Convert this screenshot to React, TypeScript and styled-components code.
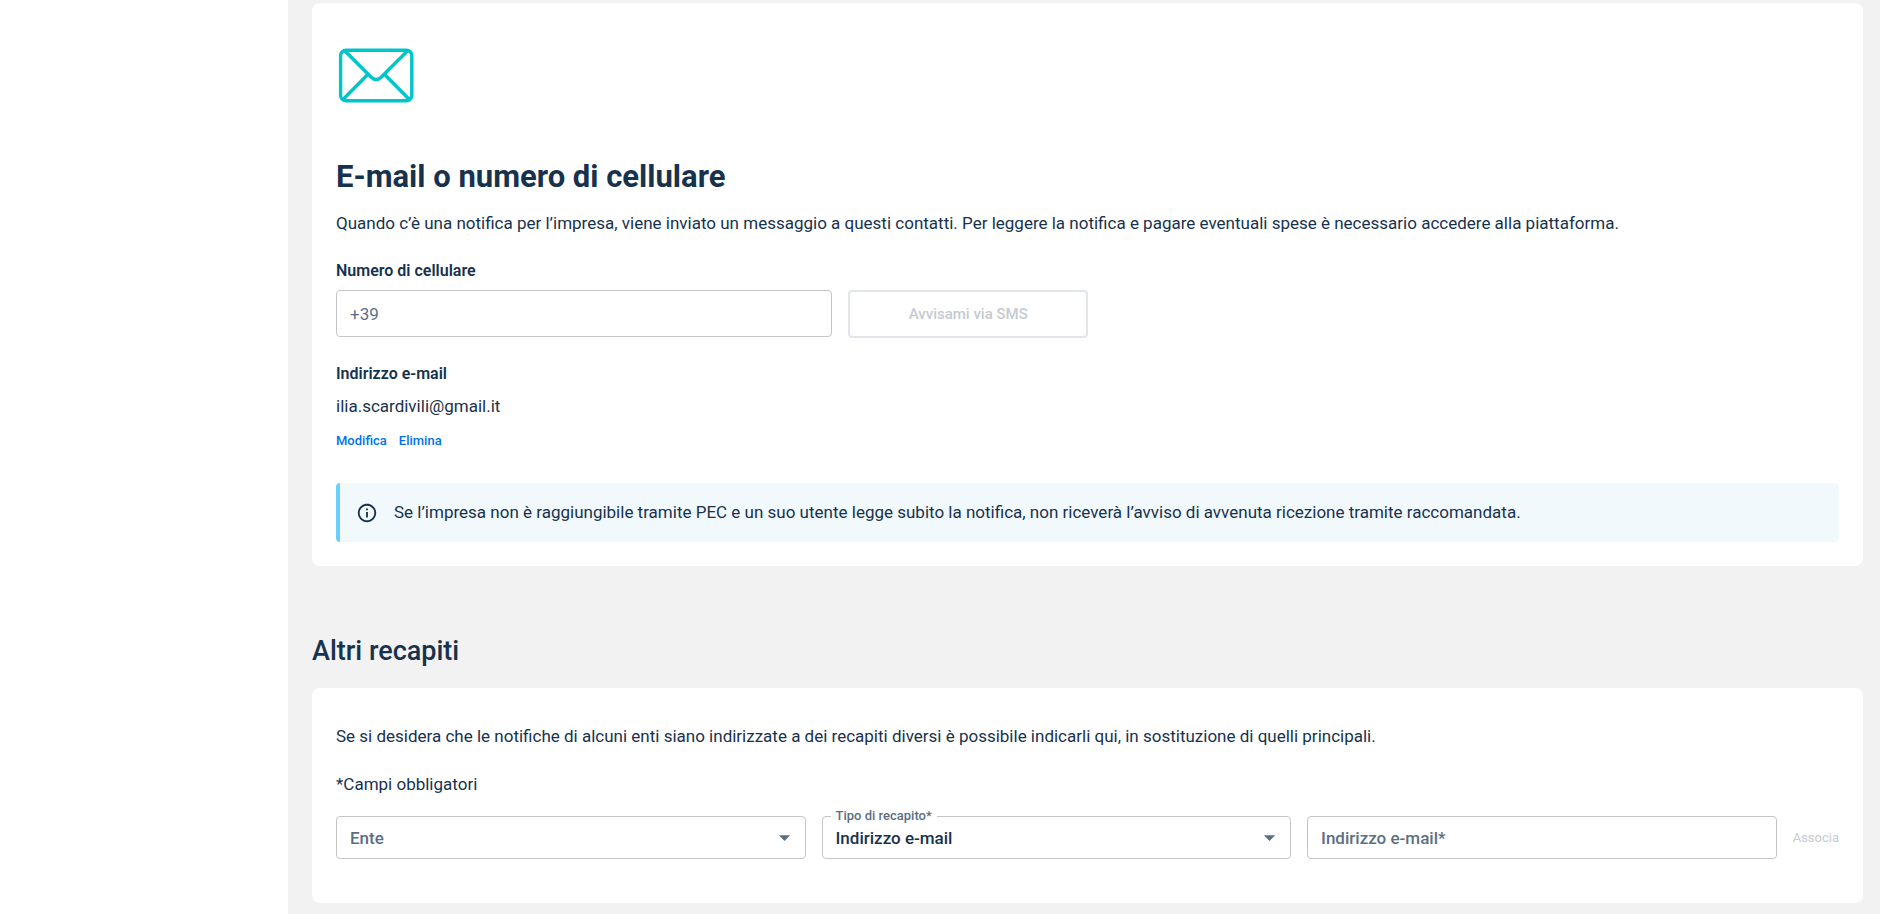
import React from 'react';
import styled, { createGlobalStyle } from 'styled-components';
import { MdInfoOutline } from 'react-icons/md';

const color = {
  text: '#17324d',
  muted: '#5c6f82',
  link: '#0073e6',
  disabled: '#c5cbd2',
  disabledBorder: '#e2e5e9',
  border: '#c4c4c4',
  page: '#f2f2f2',
  teal: '#00c5ca',
  infoBar: '#6bcffb',
  infoBg: '#f1f9fd',
};

const GlobalStyle = createGlobalStyle`
  *, *::before, *::after { box-sizing: border-box; }
  body {
    margin: 0;
    background: #fff;
    color: ${color.text};
    font: 400 17px/24px Roboto, "Liberation Sans", sans-serif;
  }
  h1, h2, h3, p { margin: 0; }
  button, input, select { font-family: inherit; margin: 0; }
`;

const Page = styled.div`
  display: grid;
  grid-template-columns: 288px minmax(0, 1fr);
  min-height: 100vh;
`;

const SideNav = styled.aside`
  background: #fff;
`;

const Main = styled.main`
  background: ${color.page};
  padding: 3px 17px 11px 24px;
`;

const Card = styled.section`
  display: flow-root;
  background: #fff;
  border-radius: 8px;
  padding: 32px 24px 24px;
`;

const OtherCard = styled(Card)`
  padding: 36px 24px 44px;
`;

const Illustration = styled.svg`
  display: block;
  width: 80px;
  height: 80px;
  margin-bottom: 42px;
  fill: none;
  stroke: ${color.teal};
  stroke-width: 3.4;
`;

const CardTitle = styled.h2`
  font-size: 31px;
  line-height: 40px;
  font-weight: 700;
  margin-bottom: 14px;
`;

const SectionTitle = styled.h2`
  font-size: 27px;
  line-height: 42px;
  font-weight: 500;
  margin: 64px 0 16px;
`;

const Paragraph = styled.p`
  margin-bottom: 24px;
`;

const FieldTitle = styled.h3`
  font-size: 16px;
  line-height: 24px;
  font-weight: 600;
  margin-bottom: 7px;
`;

const PhoneForm = styled.form`
  display: grid;
  grid-template-columns: 33% 16%;
  gap: 16px;
  align-items: start;
  margin-bottom: 24px;
`;

const TextInput = styled.input<{ $strong?: boolean }>`
  display: block;
  width: 100%;
  height: ${(p) => (p.$strong ? 43 : 47)}px;
  padding: 0 13px;
  border: 1px solid ${color.border};
  border-radius: 4px;
  background: #fff;
  color: ${color.text};
  font-size: 17px;
  font-weight: ${(p) => (p.$strong ? 500 : 400)};

  &::placeholder {
    color: ${color.muted};
    opacity: 1;
  }
`;

const OutlinedButton = styled.button`
  height: 48px;
  border: 2px solid ${color.disabledBorder};
  border-radius: 4px;
  background: #fff;
  color: ${color.disabled};
  font-size: 15px;
  font-weight: 500;
`;

const TextButton = styled.button`
  padding: 0;
  border: 0;
  background: none;
  color: ${color.link};
  font-size: 13px;
  line-height: 21px;
  font-weight: 500;

  &:disabled {
    color: ${color.disabled};
    font-weight: 400;
  }
`;

const Email = styled.p`
  line-height: 26px;
  margin-bottom: 11px;
`;

const Actions = styled.div`
  display: flex;
  gap: 12px;
  margin-bottom: 32px;
`;

const InfoBanner = styled.div`
  display: flex;
  align-items: center;
  gap: 16px;
  padding: 16px 16px 16px 20px;
  border-radius: 4px;
  background: linear-gradient(to right, ${color.infoBar} 4px, ${color.infoBg} 4px);
  line-height: 27px;

  svg {
    flex: none;
    width: 22px;
    height: 22px;
  }
`;

const ContactForm = styled.form`
  display: grid;
  grid-template-columns: repeat(3, minmax(0, 1fr)) auto;
  gap: 16px;
  align-items: center;
  margin-top: -4px;
`;

const SelectField = styled.div`
  position: relative;

  svg {
    position: absolute;
    top: 8px;
    right: 8px;
    width: 27px;
    height: 27px;
    fill: ${color.muted};
    pointer-events: none;
  }
`;

const Select = styled.select<{ $empty?: boolean }>`
  appearance: none;
  display: block;
  width: 100%;
  height: 43px;
  padding: 0 36px 0 13px;
  border: 1px solid ${color.border};
  border-radius: 4px;
  background: #fff;
  color: ${(p) => (p.$empty ? color.muted : color.text)};
  font-size: 17px;
  font-weight: 500;
`;

const FloatingLabel = styled.label`
  position: absolute;
  top: -8px;
  left: 9px;
  padding: 0 5px;
  background: #fff;
  color: ${color.muted};
  font-size: 13px;
  line-height: 16px;
  font-weight: 500;
`;

const Arrow = () => (
  <svg viewBox="0 0 24 24" aria-hidden="true">
    <path d="M7 10l5 5 5-5z" />
  </svg>
);

export default function App() {
  return (
    <>
      <GlobalStyle />
      <Page>
        <SideNav />
        <Main>
          <Card>
            <Illustration viewBox="0 0 80 80" aria-hidden="true">
              <rect x="4.6" y="15.2" width="71.2" height="50.6" rx="5.5" />
              <path d="M8.5 15.5 35 42q5.2 5 10.4 0L71.9 15.5M6.5 65 31.8 39.5M73.9 65 48.6 39.5" />
            </Illustration>
            <CardTitle>E-mail o numero di cellulare</CardTitle>
            <Paragraph>
              Quando c’è una notifica per l’impresa, viene inviato un messaggio a questi contatti. Per
              leggere la notifica e pagare eventuali spese è necessario accedere alla piattaforma.
            </Paragraph>
            <FieldTitle>
              <label htmlFor="phone">Numero di cellulare</label>
            </FieldTitle>
            <PhoneForm>
              <TextInput id="phone" type="tel" placeholder="+39" />
              <OutlinedButton type="submit" disabled>
                Avvisami via SMS
              </OutlinedButton>
            </PhoneForm>
            <FieldTitle>Indirizzo e-mail</FieldTitle>
            <Email>ilia.scardivili@gmail.it</Email>
            <Actions>
              <TextButton type="button">Modifica</TextButton>
              <TextButton type="button">Elimina</TextButton>
            </Actions>
            <InfoBanner role="note">
              <MdInfoOutline aria-hidden="true" />
              <p>
                Se l’impresa non è raggiungibile tramite PEC e un suo utente legge subito la notifica,
                non riceverà l’avviso di avvenuta ricezione tramite raccomandata.
              </p>
            </InfoBanner>
          </Card>

          <SectionTitle>Altri recapiti</SectionTitle>
          <OtherCard>
            <Paragraph>
              Se si desidera che le notifiche di alcuni enti siano indirizzate a dei recapiti diversi è
              possibile indicarli qui, in sostituzione di quelli principali.
            </Paragraph>
            <Paragraph>*Campi obbligatori</Paragraph>
            <ContactForm>
              <SelectField>
                <Select aria-label="Ente" defaultValue="" $empty>
                  <option value="">Ente</option>
                </Select>
                <Arrow />
              </SelectField>
              <SelectField>
                <Select id="contact-type" defaultValue="email">
                  <option value="email">Indirizzo e-mail</option>
                </Select>
                <FloatingLabel htmlFor="contact-type">Tipo di recapito*</FloatingLabel>
                <Arrow />
              </SelectField>
              <TextInput
                $strong
                type="email"
                aria-label="Indirizzo e-mail"
                placeholder="Indirizzo e-mail*"
              />
              <TextButton type="submit" disabled>
                Associa
              </TextButton>
            </ContactForm>
          </OtherCard>
        </Main>
      </Page>
    </>
  );
}
